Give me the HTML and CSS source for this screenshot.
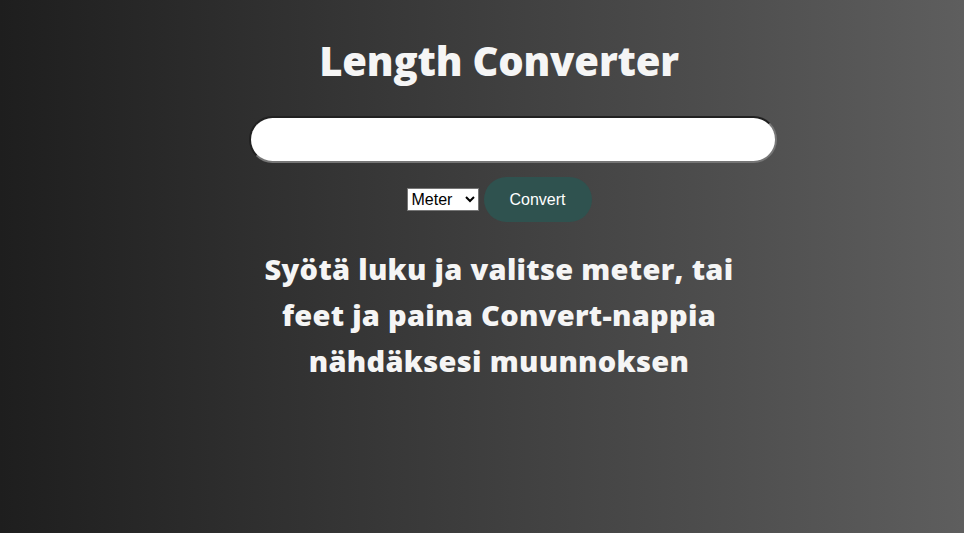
FILE: index.html
```html
<!DOCTYPE html>
<html lang="fi">
<head>
<meta charset="utf-8">
<title>Length Converter</title>
<link rel="stylesheet" href="styles.css">
</head>
<body>
<main class="app">
  <h1 class="title">Length Converter</h1>
  <input class="value-input" type="text">
  <div class="controls">
    <select class="unit-select">
      <option>Meter</option>
      <option>Feet</option>
    </select>
    <button class="convert-btn" type="button">Convert</button>
  </div>
  <p class="result">Syötä luku ja valitse meter, tai feet ja paina Convert-nappia nähdäksesi muunnoksen</p>
</main>
</body>
</html>
```
FILE: styles.css
```css
html, body {
  height: 100%;
}
body {
  margin: 0;
  padding-left: 34px;
  background: linear-gradient(to right, #1e1e1e, #5e5e5e);
  font-family: "Open Sans", sans-serif;
  color: #f5f5f5;
}
.app {
  width: 500px;
  margin: 0 auto;
  padding-top: 33px;
  display: flex;
  flex-direction: column;
  align-items: flex-start;
}
.title {
  align-self: center;
  margin: 0 0 27px;
  font-size: 40px;
  font-weight: 800;
  line-height: 56px;
  letter-spacing: -0.2px;
}
.value-input {
  box-sizing: border-box;
  width: 528px;
  height: 47px;
  padding: 0 12px;
  font-size: 16px;
  border: 2px inset #767676;
  border-radius: 24px;
  background: #fff;
  outline: none;
}
.controls {
  align-self: center;
  display: flex;
  align-items: center;
  gap: 5px;
  margin-top: 14px;
}
.unit-select {
  box-sizing: border-box;
  width: 72px;
  height: 23px;
  font-family: Arial, "Liberation Sans", sans-serif;
  font-size: 16px;
  background: #fff;
  color: #000;
  border: 1px solid #767676;
}
.convert-btn {
  font-family: Arial, "Liberation Sans", sans-serif;
  font-size: 16px;
  color: #fff;
  background: #2f524f;
  border: none;
  border-radius: 23px;
  width: 108px;
  height: 45px;
}
.result {
  align-self: center;
  margin: 24px 0 0;
  text-align: center;
  font-size: 29px;
  font-weight: 800;
  line-height: 46px;
  letter-spacing: 0.3px;
}
```
